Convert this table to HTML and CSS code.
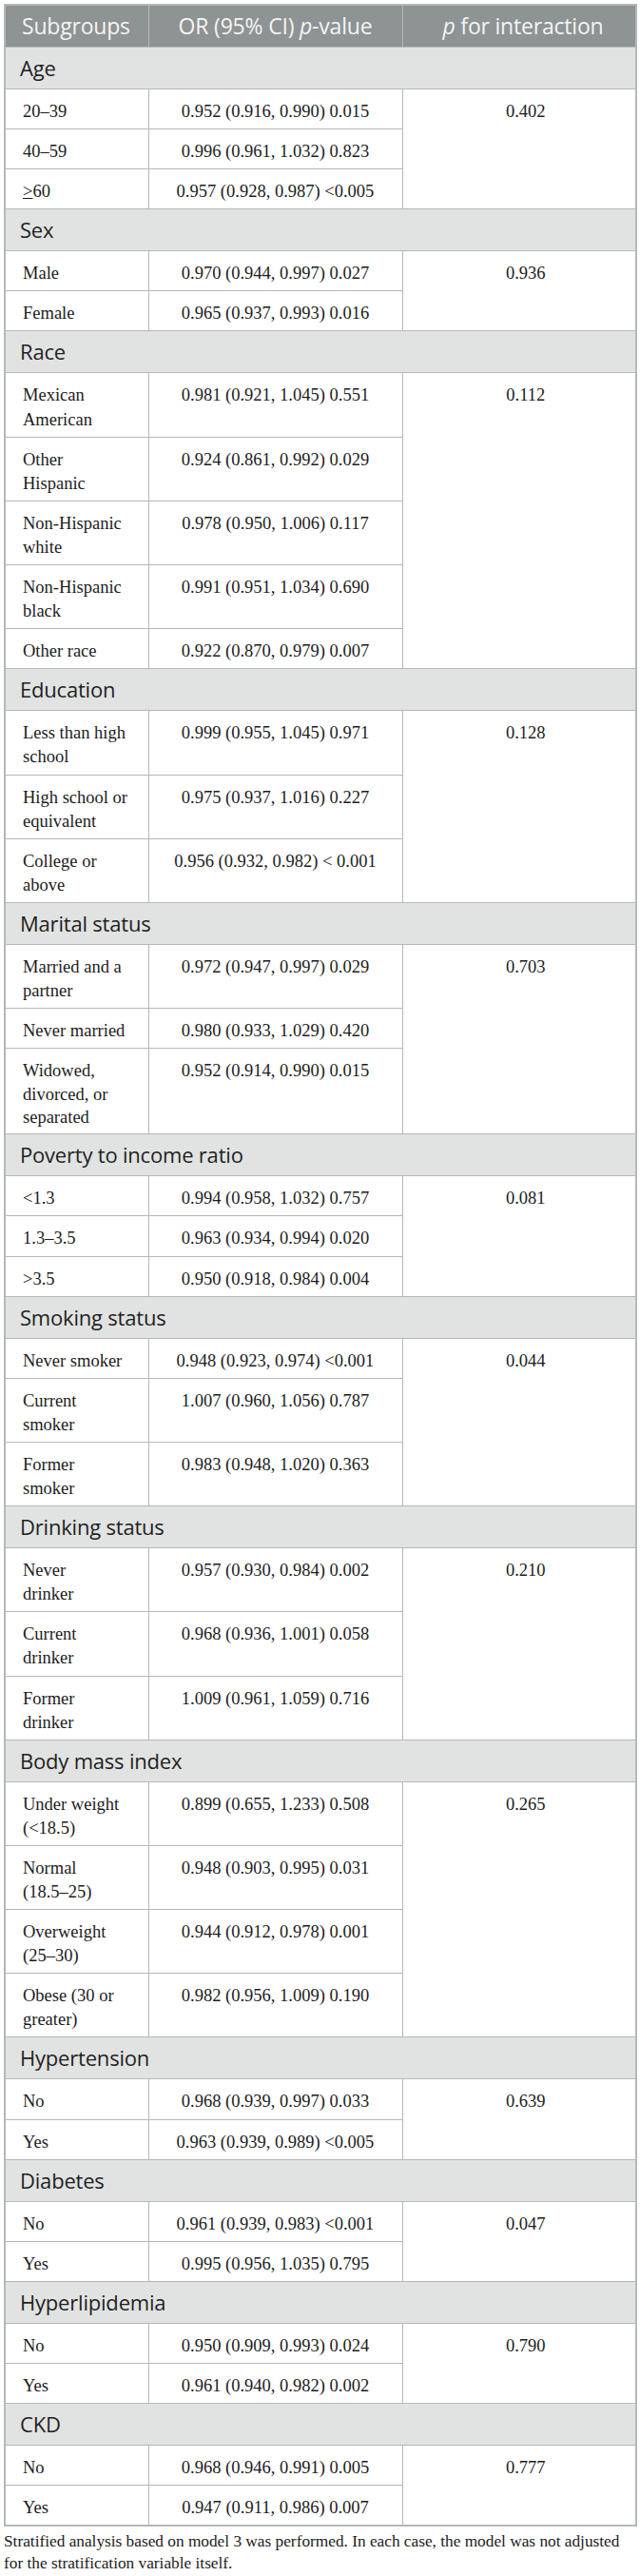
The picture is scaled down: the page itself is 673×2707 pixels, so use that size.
FILE: index.html
```html
<!DOCTYPE html>
<html lang="en">
<head>
<meta charset="utf-8">
<title>Stratified analysis</title>
<link rel="stylesheet" href="styles.css">
</head>
<body>
<div class="wrap">
<table class="tbl">
  <colgroup><col class="c1"><col class="c2"><col class="c3"></colgroup>
  <thead>
    <tr class="head"><th class="h1">Subgroups</th><th class="h2">OR (95% CI) <i>p</i>-value</th><th class="h3"><i>p</i> for interaction</th></tr>
  </thead>
  <tbody>
    <tr class="sec"><td colspan="3">Age</td></tr>
    <tr><td>20–39</td><td class="v">0.952 (0.916, 0.990) 0.015</td><td class="p" rowspan="3">0.402</td></tr>
    <tr><td>40–59</td><td class="v">0.996 (0.961, 1.032) 0.823</td></tr>
    <tr><td><u>&gt;</u>60</td><td class="v">0.957 (0.928, 0.987) &lt;0.005</td></tr>

    <tr class="sec"><td colspan="3">Sex</td></tr>
    <tr><td>Male</td><td class="v">0.970 (0.944, 0.997) 0.027</td><td class="p" rowspan="2">0.936</td></tr>
    <tr><td>Female</td><td class="v">0.965 (0.937, 0.993) 0.016</td></tr>

    <tr class="sec"><td colspan="3">Race</td></tr>
    <tr><td>Mexican<br>American</td><td class="v">0.981 (0.921, 1.045) 0.551</td><td class="p" rowspan="5">0.112</td></tr>
    <tr><td>Other<br>Hispanic</td><td class="v">0.924 (0.861, 0.992) 0.029</td></tr>
    <tr><td>Non-Hispanic<br>white</td><td class="v">0.978 (0.950, 1.006) 0.117</td></tr>
    <tr><td>Non-Hispanic<br>black</td><td class="v">0.991 (0.951, 1.034) 0.690</td></tr>
    <tr><td>Other race</td><td class="v">0.922 (0.870, 0.979) 0.007</td></tr>

    <tr class="sec"><td colspan="3">Education</td></tr>
    <tr><td>Less than high<br>school</td><td class="v">0.999 (0.955, 1.045) 0.971</td><td class="p" rowspan="3">0.128</td></tr>
    <tr><td>High school or<br>equivalent</td><td class="v">0.975 (0.937, 1.016) 0.227</td></tr>
    <tr><td>College or<br>above</td><td class="v">0.956 (0.932, 0.982) &lt; 0.001</td></tr>

    <tr class="sec"><td colspan="3">Marital status</td></tr>
    <tr><td>Married and a<br>partner</td><td class="v">0.972 (0.947, 0.997) 0.029</td><td class="p" rowspan="3">0.703</td></tr>
    <tr><td>Never married</td><td class="v">0.980 (0.933, 1.029) 0.420</td></tr>
    <tr class="tri"><td>Widowed,<br>divorced, or<br>separated</td><td class="v">0.952 (0.914, 0.990) 0.015</td></tr>

    <tr class="sec"><td colspan="3">Poverty to income ratio</td></tr>
    <tr><td>&lt;1.3</td><td class="v">0.994 (0.958, 1.032) 0.757</td><td class="p" rowspan="3">0.081</td></tr>
    <tr><td>1.3–3.5</td><td class="v">0.963 (0.934, 0.994) 0.020</td></tr>
    <tr><td>&gt;3.5</td><td class="v">0.950 (0.918, 0.984) 0.004</td></tr>

    <tr class="sec"><td colspan="3">Smoking status</td></tr>
    <tr><td>Never smoker</td><td class="v">0.948 (0.923, 0.974) &lt;0.001</td><td class="p" rowspan="3">0.044</td></tr>
    <tr><td>Current<br>smoker</td><td class="v">1.007 (0.960, 1.056) 0.787</td></tr>
    <tr><td>Former<br>smoker</td><td class="v">0.983 (0.948, 1.020) 0.363</td></tr>

    <tr class="sec"><td colspan="3">Drinking status</td></tr>
    <tr><td>Never<br>drinker</td><td class="v">0.957 (0.930, 0.984) 0.002</td><td class="p" rowspan="3">0.210</td></tr>
    <tr><td>Current<br>drinker</td><td class="v">0.968 (0.936, 1.001) 0.058</td></tr>
    <tr><td>Former<br>drinker</td><td class="v">1.009 (0.961, 1.059) 0.716</td></tr>

    <tr class="sec"><td colspan="3">Body mass index</td></tr>
    <tr><td>Under weight<br>(&lt;18.5)</td><td class="v">0.899 (0.655, 1.233) 0.508</td><td class="p" rowspan="4">0.265</td></tr>
    <tr><td>Normal<br>(18.5–25)</td><td class="v">0.948 (0.903, 0.995) 0.031</td></tr>
    <tr><td>Overweight<br>(25–30)</td><td class="v">0.944 (0.912, 0.978) 0.001</td></tr>
    <tr><td>Obese (30 or<br>greater)</td><td class="v">0.982 (0.956, 1.009) 0.190</td></tr>

    <tr class="sec"><td colspan="3">Hypertension</td></tr>
    <tr><td>No</td><td class="v">0.968 (0.939, 0.997) 0.033</td><td class="p" rowspan="2">0.639</td></tr>
    <tr><td>Yes</td><td class="v">0.963 (0.939, 0.989) &lt;0.005</td></tr>

    <tr class="sec"><td colspan="3">Diabetes</td></tr>
    <tr><td>No</td><td class="v">0.961 (0.939, 0.983) &lt;0.001</td><td class="p" rowspan="2">0.047</td></tr>
    <tr><td>Yes</td><td class="v">0.995 (0.956, 1.035) 0.795</td></tr>

    <tr class="sec"><td colspan="3">Hyperlipidemia</td></tr>
    <tr><td>No</td><td class="v">0.950 (0.909, 0.993) 0.024</td><td class="p" rowspan="2">0.790</td></tr>
    <tr><td>Yes</td><td class="v">0.961 (0.940, 0.982) 0.002</td></tr>

    <tr class="sec"><td colspan="3">CKD</td></tr>
    <tr><td>No</td><td class="v">0.968 (0.946, 0.991) 0.005</td><td class="p" rowspan="2">0.777</td></tr>
    <tr><td>Yes</td><td class="v">0.947 (0.911, 0.986) 0.007</td></tr>
  </tbody>
</table>
<p class="note">Stratified analysis based on model 3 was performed. In each case, the model was not adjusted<br>for the stratification variable itself.</p>
</div>
</body>
</html>
```
FILE: styles.css
```css
html, body {
  margin: 0;
  padding: 0;
  background: #ffffff;
}

.wrap {
  padding: 4px 5px 0 4px;
}

.tbl {
  width: 664px;
  border-collapse: collapse;
  table-layout: fixed;
  border: 2px solid #b4b8b7;
  font-family: "Liberation Serif", "Times New Roman", serif;
  font-size: 18.5px;
  color: #1c1c1c;
}

.c1 { width: 151px; }
.c2 { width: 267px; }
.c3 { width: 246px; }

.tbl th,
.tbl td {
  border: 1px solid #b4b8b7;
  vertical-align: top;
  line-height: 25.1px;
  padding: 11px 6px 5px 18px;
  white-space: nowrap;
  overflow: hidden;
}

.tri td {
  line-height: 24.4px;
}

.head th {
  background: #8e9394;
  color: #f4f5f5;
  font-family: "Open Sans", "Liberation Sans", sans-serif;
  font-weight: 400;
  font-size: 23px;
  line-height: 30px;
  padding: 6px 6px 7px 17px;
  text-align: left;
  letter-spacing: -0.2px;
}

.head .h2 { text-align: center; padding-left: 6px; }
.head .h3 { text-align: left; padding-left: 42px; }

.sec td {
  background: #e1e3e2;
  font-family: "Open Sans", "Liberation Sans", sans-serif;
  font-size: 22px;
  line-height: 30px;
  padding: 6px 6px 7px 15px;
  color: #1f1f1f;
  letter-spacing: -0.2px;
}

.tbl td.v {
  text-align: center;
  padding-left: 6px;
}

.tbl td.p {
  text-align: center;
  padding-left: 20px;
}

.note {
  margin: 4px 0 0 0;
  font-family: "Liberation Serif", "Times New Roman", serif;
  font-size: 17.3px;
  line-height: 23px;
  color: #1c1c1c;
  white-space: nowrap;
}
```
